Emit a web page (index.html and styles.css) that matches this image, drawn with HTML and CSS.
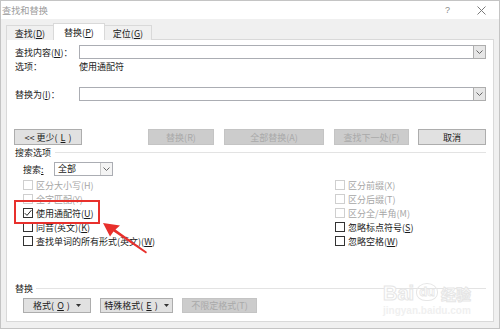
FILE: index.html
```html
<!DOCTYPE html>
<html lang="zh-CN">
<head>
<meta charset="utf-8">
<title>查找和替换</title>
<link rel="stylesheet" href="styles.css">
</head>
<body>
<div class="window">
  <div class="titlebar">
    <span class="title">查找和替换</span>
    <span class="help">?</span>
    <svg class="close" width="9" height="9" viewBox="0 0 9 9"><path d="M0.5 0.5L8.5 8.5M8.5 0.5L0.5 8.5" stroke="#7a7a7a" stroke-width="1" fill="none"/></svg>
  </div>
  <div class="main">
    <div class="tabs">
      <div class="tab">查找(<u>D</u>)</div>
      <div class="tab active">替换(<u>P</u>)</div>
      <div class="tab">定位(<u>G</u>)</div>
    </div>
    <div class="panel">
      <div class="field-row">
        <span class="field-label">查找内容(<u>N</u>)：</span>
        <div class="combo">
          <div class="combo-text"></div>
          <div class="combo-btn"><svg width="7" height="4" viewBox="0 0 7 4"><path d="M0.5 0.5L3.5 3.5L6.5 0.5" stroke="#666" fill="none"/></svg></div>
        </div>
      </div>
      <div class="opt-row">
        <span class="field-label">选项：</span>
        <span>使用通配符</span>
      </div>
      <div class="field-row replace-row">
        <span class="field-label">替换为(<u>I</u>)：</span>
        <div class="combo">
          <div class="combo-text"></div>
          <div class="combo-btn"><svg width="7" height="4" viewBox="0 0 7 4"><path d="M0.5 0.5L3.5 3.5L6.5 0.5" stroke="#666" fill="none"/></svg></div>
        </div>
      </div>
      <div class="btn-row">
        <button class="btn less">&lt;&lt; 更少(<u>L</u>)</button>
        <div class="btn-group">
          <button class="btn disabled w66">替换(R)</button>
          <button class="btn disabled w100">全部替换(A)</button>
          <button class="btn disabled w75">查找下一处(F)</button>
          <button class="btn w68 cancel">取消</button>
        </div>
      </div>
      <div class="section-head"><span>搜索选项</span><div class="rule"></div></div>
      <div class="search-row">
        <span class="search-label">搜索<u>:</u></span>
        <div class="select">
          <span class="select-text">全部</span>
          <div class="select-btn"><svg width="7" height="4" viewBox="0 0 7 4"><path d="M0.5 0.5L3.5 3.5L6.5 0.5" stroke="#666" fill="none"/></svg></div>
        </div>
      </div>
      <div class="checks">
        <div class="check disabled"><span class="box"></span>区分大小写(H)</div>
        <div class="check disabled"><span class="box"></span>区分前缀(X)</div>
        <div class="check disabled"><span class="box"></span>全字匹配(Y)</div>
        <div class="check disabled"><span class="box"></span>区分后缀(T)</div>
        <div class="check"><span class="box"><svg width="8" height="8" viewBox="0 0 8 8"><path d="M0.8 4.2L3 6.4L7.4 1.2" stroke="#222" stroke-width="1" fill="none"/></svg></span>使用通配符(<u>U</u>)</div>
        <div class="check disabled"><span class="box"></span>区分全/半角(M)</div>
        <div class="check"><span class="box"></span>同音(英文)(<u>K</u>)</div>
        <div class="check"><span class="box"></span>忽略标点符号(<u>S</u>)</div>
        <div class="check"><span class="box"></span>查找单词的所有形式(英文)(<u>W</u>)</div>
        <div class="check"><span class="box"></span>忽略空格(<u>W</u>)</div>
      </div>
      <div class="section-head replace-head"><span>替换</span><div class="rule"></div></div>
      <div class="bottom-row">
        <button class="btn w68">格式(<u>O</u>) <svg class="caret" width="5" height="3" viewBox="0 0 5 3"><path d="M0 0H5L2.5 3Z" fill="#333"/></svg></button>
        <button class="btn w73">特殊格式(<u>E</u>) <svg class="caret" width="5" height="3" viewBox="0 0 5 3"><path d="M0 0H5L2.5 3Z" fill="#333"/></svg></button>
        <button class="btn disabled w75">不限定格式(T)</button>
      </div>
    </div>
  </div>

  <div class="highlight"></div>
  <svg class="arrow" width="60" height="40" viewBox="0 0 60 40">
    <path d="M2 2 L19 4.5 L14.5 8.6 L46 31 L45 32.4 L12.5 10.6 L9 15.5 Z" fill="#e8302c"/>
  </svg>
  <div class="watermark">
    <div class="wm-logo"><span class="wm-bai">Bai</span><span class="wm-du">du</span><span class="wm-jy">经验</span></div>
    <div class="wm-url">jingyan.baidu.com</div>
  </div>
</div>
</body>
</html>
```

FILE: styles.css
```css
* { box-sizing: border-box; }
html, body { margin: 0; padding: 0; }
body {
  width: 500px;
  height: 329px;
  overflow: hidden;
  font-family: "Noto Sans CJK SC", "Microsoft YaHei", sans-serif;
  font-size: 9px;
  color: #1a1a1a;
  background: #f0f0f0;
}
u { text-decoration: underline; text-underline-offset: 1px; }

.window {
  position: relative;
  width: 500px;
  height: 329px;
  border: 1px solid #c4c4c4;
  background: #f0f0f0;
  display: flex;
  flex-direction: column;
}

.titlebar {
  height: 18px;
  flex: none;
  background: #fff;
  display: flex;
  align-items: center;
  padding-left: 1px;
  color: #9b9b9b;
  font-size: 9.2px;
}
.title { flex: 1; }
.help { color: #8a8a8a; font-family: "Liberation Sans", sans-serif; font-size: 9px; margin-right: 27px; }
.close { margin-right: 13px; }

.main {
  flex: 1;
  display: flex;
  flex-direction: column;
  padding: 4px 5px 6px 5px;
}

.tabs {
  display: flex;
  align-items: flex-end;
  height: 17px;
  margin-bottom: -1px;
  position: relative;
  z-index: 1;
}
.tab {
  width: 48px;
  height: 15px;
  border: 1px solid #d9d9d9;
  border-bottom: none;
  background: #f0f0f0;
  display: flex;
  align-items: center;
  justify-content: center;
  padding-top: 1px;
}
.tab + .tab { margin-left: -1px; }
.tab.active {
  width: 52px;
  height: 17px;
  background: #fff;
  padding-top: 0;
}

.panel {
  flex: 1;
  background: #fff;
  border: 1px solid #d9d9d9;
  padding: 5px 7px 0 8px;
  display: flex;
  flex-direction: column;
}

.field-row {
  display: flex;
  align-items: center;
  height: 14px;
}
.field-label { width: 64px; flex: none; }
.combo {
  flex: 1;
  height: 14px;
  border: 1px solid #abadb3;
  display: flex;
}
.combo-text { flex: 1; }
.combo-btn {
  width: 13px;
  margin: -1px -1px -1px 0;
  border: 1px solid #adadad;
  background: #e6e6e6;
  display: flex;
  align-items: center;
  justify-content: center;
}
.opt-row {
  display: flex;
  align-items: center;
  height: 12px;
  margin-top: 1px;
}
.replace-row { margin-top: 15px; }

.btn {
  font-family: inherit;
  font-size: 9px;
  color: #1a1a1a;
  height: 16px;
  padding: 0;
  border: 1px solid #adadad;
  background: #e1e1e1;
  display: flex;
  align-items: center;
  justify-content: center;
  gap: 3px;
}
.btn.disabled {
  background: #cccccc;
  border-color: #c4c4c4;
  color: #a9a9a9;
}
.btn-row {
  display: flex;
  margin-top: 28px;
  height: 16px;
}
.btn.less { width: 68px; margin-left: -1px; }
.btn-group { margin-left: auto; display: flex; gap: 10px; }
.btn.cancel { margin-left: -1px; }
.w66 { width: 66px; }
.w68 { width: 68px; }
.w73 { width: 73px; }
.w75 { width: 75px; }
.w100 { width: 100px; }

.section-head {
  display: flex;
  align-items: center;
  height: 12px;
  margin-top: 1px;
}
.section-head .rule {
  flex: 1;
  height: 1px;
  background: #e3e3e3;
  margin-left: 4px;
}
.replace-head { margin-top: 34px; }
.replace-head .rule { margin-left: 3px; }

.search-row {
  display: flex;
  align-items: center;
  margin-top: 4px;
  padding-left: 8px;
  height: 14px;
}
.search-label { width: 31px; }
.select {
  width: 59px;
  height: 14px;
  border: 1px solid #abadb3;
  display: flex;
}
.select-text { flex: 1; padding-left: 3px; line-height: 12px; }
.select-btn {
  width: 12px;
  border-left: 1px solid #c9c9c9;
  background: #f4f4f4;
  display: flex;
  align-items: center;
  justify-content: center;
}

.checks {
  display: grid;
  grid-template-columns: 312px 1fr;
  grid-auto-rows: 14px;
  margin-top: 2px;
  padding-left: 8px;
}
.check {
  display: flex;
  align-items: center;
  white-space: nowrap;
}
.check .box {
  width: 10px;
  height: 10px;
  border: 1px solid #333;
  background: #fff;
  margin-right: 3px;
  display: flex;
  align-items: center;
  justify-content: center;
}
.check.disabled { color: #a6a6a6; }
.check.disabled .box { border-color: #cfcfcf; }

.bottom-row {
  display: flex;
  gap: 9px;
  margin-top: 4px;
  padding-left: 8px;
}
.bottom-row .btn { height: 15px; }
.caret { margin-left: 3px; }

.highlight {
  position: absolute;
  left: 13px;
  top: 199px;
  width: 86px;
  height: 24px;
  border: 2px solid #e8302c;
}
.arrow {
  position: absolute;
  left: 100px;
  top: 220px;
}

.watermark {
  position: absolute;
  left: 382px;
  top: 272px;
  width: 92px;
  pointer-events: none;
}
.wm-logo {
  display: flex;
  align-items: flex-end;
  height: 30px;
  font-family: "Liberation Sans", sans-serif;
  font-weight: bold;
  color: #ffffff;
  -webkit-text-stroke: 1px #e6e6e6;
}
.wm-bai { font-size: 20px; line-height: 20px; }
.wm-du {
  font-size: 13px;
  line-height: 14px;
  margin: 0 3px 2px 2px;
  border: 1.5px solid #e6e6e6;
  border-radius: 50% 50% 45% 45%;
  padding: 1px 2px;
  -webkit-text-stroke: 0.8px #e6e6e6;
}
.wm-jy { font-family: "Noto Sans CJK SC", sans-serif; font-size: 15px; line-height: 18px; }
.wm-url {
  margin-top: 2px;
  font-family: "Liberation Sans", sans-serif;
  font-size: 10px;
  font-weight: bold;
  color: #f0f0f0;
}
```
